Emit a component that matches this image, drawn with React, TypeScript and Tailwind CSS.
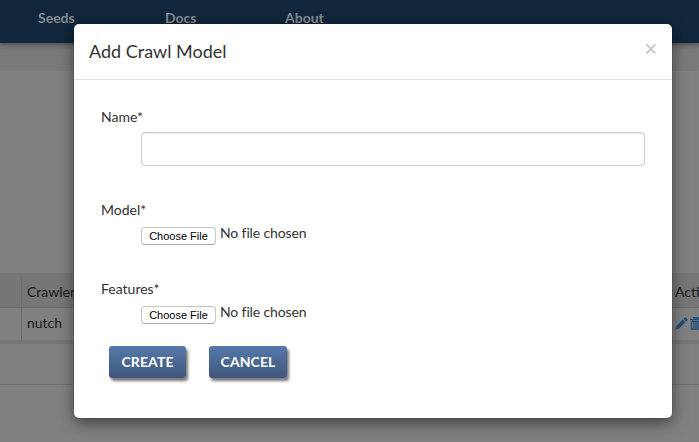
import React from "react";

function FileField({ label }: { label: string }) {
  return (
    <div className="h-[79px]">
      <div className="pl-[27px] text-[14px] leading-5">{label}</div>
      <div className="ml-[67px] mt-[6px] flex h-5 items-start">
        <button className="mt-[1px] h-[18px] w-[75px] rounded-[4px] border border-[#c6c6c6] border-b-[#a9a9a9] bg-white font-['Liberation_Sans',Arial,sans-serif] text-[11px] leading-[16px] whitespace-nowrap text-black">
          Choose File
        </button>
        <span className="ml-[4px] text-[14px] leading-[13px] tracking-[-0.13px]">No file chosen</span>
      </div>
    </div>
  );
}

function ActionButton({ label, width }: { label: string; width: string }) {
  return (
    <button
      className={`${width} h-8 rounded-[3px] bg-linear-to-b from-[#5679ac] to-[#3e5779] text-[14px] leading-8 font-bold tracking-[0.1px] text-white shadow-[2px_3px_3px_#777]`}
    >
      {label}
    </button>
  );
}

function PencilIcon() {
  return (
    <svg className="h-[13px] w-[13px]" viewBox="0 0 13 13" fill="#1f4f7a">
      <path d="M8.3 2 9.6.7q.8-.7 1.5 0l1.2 1.2q.7.7 0 1.5L11 4.7zM7.7 2.6l2.7 2.7-6.3 6.3L.2 12.8 1.4 8.9z" />
      <path d="m1.1 11 .9.9" stroke="#808080" strokeWidth=".6" />
    </svg>
  );
}

function TrashIcon() {
  return (
    <svg className="h-[13px] w-[12px]" viewBox="0 0 12 13" fill="none" stroke="#1f4f7a">
      <path d="M0 2.5h12M4 2V.7h4V2" strokeWidth="1.5" />
      <path d="M1.5 4v8h9V4M1 4.4h10M3.9 5v6M6 5v6M8.1 5v6" strokeWidth="1.4" />
    </svg>
  );
}

export default function App() {
  return (
    <div className="relative h-[442px] w-[699px] overflow-hidden bg-[#808080] font-[Lato,sans-serif] text-[14px] text-[#1a1a1a]">
      <header className="relative h-[43px] bg-[#10263b] shadow-[0_1px_6px_rgba(0,0,0,0.5)]">
        <nav className="flex pt-[8px] pl-[38px] leading-5 font-bold text-[#858b90]">
          <span className="w-[127px]">Seeds</span>
          <span className="w-[120px]">Docs</span>
          <span>About</span>
        </nav>
      </header>
      <div className="h-[28px] bg-[#7a7a7a]" />
      <div className="mt-[202px] flex h-[35px] items-center border-b border-[#6d6d6d] bg-[#767676]">
        <div className="mt-[4px] h-[30px] w-[22px] shrink-0 border-r border-[#6d6d6d]" />
        <span className="w-[653px] shrink-0 pt-[3px] pl-[5px]">Crawler</span>
        <span className="shrink-0 pt-[3px] whitespace-nowrap">Acti</span>
      </div>
      <div className="flex h-[32px] items-center">
        <div className="h-full w-[22px] shrink-0 border-r border-[#6d6d6d]" />
        <span className="w-[653px] shrink-0 pb-[3px] pl-[5px]">nutch</span>
        <span className="flex shrink-0 gap-[2px] pb-[1px]">
          <PencilIcon />
          <TrashIcon />
        </span>
      </div>
      <div className="h-1 bg-[#767676]" />
      <div className="h-[41px] border-b border-[#717171]" />

      <section
        role="dialog"
        className="absolute top-6 left-[74px] h-[394px] w-[598px] rounded-[5px] bg-white text-[#333] shadow-[0_5px_15px_rgba(0,0,0,0.5),0_0_1px_rgba(0,0,0,0.5)]"
      >
        <div className="flex h-14 items-start justify-between border-b border-[#e2e2e2] pt-[15px] pr-[15px] pl-[15px]">
          <h4 className="text-[18px] leading-[25px]">Add Crawl Model</h4>
          <button aria-label="Close">
            <svg className="mt-[4px] h-3 w-3" viewBox="0 0 12 12">
              <path d="m1.4 1.4 9 9m0-9-9 9" stroke="#c8c8c8" strokeWidth="1.9" />
            </svg>
          </button>
        </div>
        <form className="pt-[27px]">
          <div className="h-[93px]">
            <label className="block pl-[27px] text-[14px] leading-5">Name*</label>
            <input className="mt-[5px] ml-[67px] h-[34px] w-[504px] rounded-[4px] border border-[#ccc] shadow-[inset_0_1px_1px_rgba(0,0,0,0.075)]" />
          </div>
          <FileField label="Model*" />
          <FileField label="Features*" />
          <div className="-mt-[12px] flex gap-[23px] pl-[35px]">
            <ActionButton label="CREATE" width="w-[77px]" />
            <ActionButton label="CANCEL" width="w-[78px]" />
          </div>
        </form>
      </section>
    </div>
  );
}
